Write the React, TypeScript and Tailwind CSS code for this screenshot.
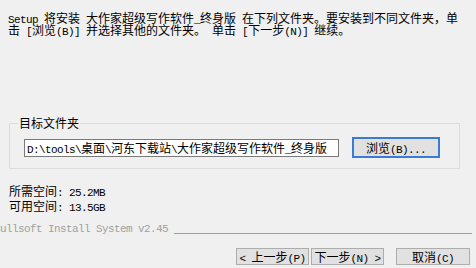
import React from 'react';

// half-width latin in the bitmap look of the dialog font
const M: React.FC<{ t: string }> = ({ t }) => (
  <span className="font-['Liberation_Mono',monospace] text-[11px] leading-[0] tracking-[-0.6px] whitespace-pre">{t}</span>
);

const Btn: React.FC<{ w: string; children: React.ReactNode }> = ({ w, children }) => (
  <div className={`${w} h-[17px] border border-[#adadad] bg-[#e1e1e1] flex items-center justify-center leading-[12px] whitespace-nowrap`}>
    <div className="h-[12px]">{children}</div>
  </div>
);

const App: React.FC = () => {
  return (
    <div className="w-[476px] h-[268px] overflow-hidden bg-[#f0f0f0] text-black text-[12px] font-['Noto_Sans_CJK_SC',sans-serif]">
      {/* intro */}
      <div className="pt-[12px] pl-[8px] leading-[12px] whitespace-nowrap">
        <div className="h-[12px]">
          <M t="Setup " />将安装<M t=" " />大作家超级写作软件<M t="_" />终身版<M t=" " />在下列文件夹。要安装到不同文件夹，单
        </div>
        <div className="h-[12px]">
          击<M t=" [" />浏览<M t="(B)] " />并选择其他的文件夹。<M t=" " />单击<M t=" [" />下一步<M t="(N)] " />继续。
        </div>
      </div>

      {/* destination group */}
      <div className="relative mt-[87px] ml-[9px] w-[451px] h-[46px] border border-[#dcdcdc] flex items-start pl-[14px] pt-[13px]">
        <span className="absolute -top-[7px] left-[8px] px-[1px] bg-[#f0f0f0] leading-[12px]">目标文件夹</span>
        <div className="mt-[2px] w-[315px] h-[18px] border border-[#7a7a7a] bg-white pl-[2px] flex items-center leading-[12px] whitespace-nowrap overflow-hidden">
          <div className="h-[12px]">
            <M t="D:\tools\" />桌面<M t="\" />河东下载站<M t="\" />大作家超级写作软件<M t="_" />终身版
          </div>
        </div>
        <div className="ml-[13px] w-[88px] h-[21px] border-2 border-[#3a7bd5] bg-[#e1e1e1] flex items-center justify-center leading-[12px] whitespace-nowrap">
          <div className="h-[12px]">
            浏览<M t="(B)..." />
          </div>
        </div>
      </div>

      {/* space info */}
      <div className="mt-[14px] pl-[9px] leading-[15px]">
        <div className="h-[15px]">
          所需空间<M t=": 25.2MB" />
        </div>
        <div className="h-[15px]">
          可用空间<M t=": 13.5GB" />
        </div>
      </div>

      {/* branding */}
      <div className="mt-[10px] h-[12px] flex items-start">
        <span className="-ml-[6px] leading-[12px] text-[#a0a0a0] font-['Liberation_Mono',monospace] text-[11px] tracking-[-0.6px] whitespace-pre">
          Nullsoft Install System v2.45
        </span>
        <div className="flex-1 mt-[10px] ml-[6px] mr-[4px] h-px bg-[#a0a0a0]" />
      </div>

      {/* buttons */}
      <div className="mt-[13px] flex justify-end pr-[6px]">
        <Btn w="w-[73px]">
          <M t="< " />上一步<M t="(P)" />
        </Btn>
        <div className="ml-[2px]">
          <Btn w="w-[73px]">
            下一步<M t="(N) >" />
          </Btn>
        </div>
        <div className="ml-[12px]">
          <Btn w="w-[74px]">
            取消<M t="(C)" />
          </Btn>
        </div>
      </div>
    </div>
  );
};

export default App;
